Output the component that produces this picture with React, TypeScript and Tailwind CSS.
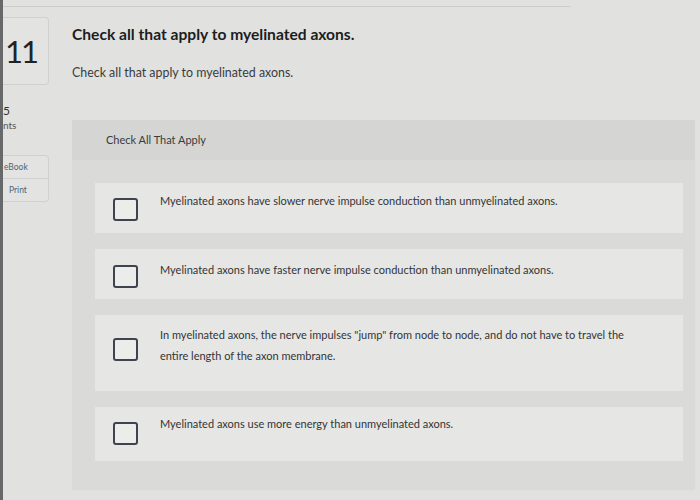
import React from "react";

const options = [
  { text: "Myelinated axons have slower nerve impulse conduction than unmyelinated axons.", h: "h-[50px]", box: "mt-[15px]", txt: "mt-[7px]" },
  { text: "Myelinated axons have faster nerve impulse conduction than unmyelinated axons.", h: "h-[50px]", box: "mt-[16px]", txt: "mt-[10px]" },
  { text: "In myelinated axons, the nerve impulses \"jump\" from node to node, and do not have to travel the entire length of the axon membrane.", h: "h-[76px]", box: "mt-[23px]", txt: "mt-[9px]" },
  { text: "Myelinated axons use more energy than unmyelinated axons.", h: "h-[54px]", box: "mt-[15px]", txt: "mt-[6px]" },
];

export default function App() {
  return (
    <div
      className="w-[700px] h-[500px] overflow-hidden bg-[#e1e2df] flex text-[#2f3033]"
      style={{ fontFamily: "Lato, 'Open Sans', sans-serif" }}
    >
      <div className="w-[3px] h-full bg-[#66686a] shrink-0" />
      <div className="flex-1 flex flex-col">
        <div className="h-[7px] w-[567px] border-b border-[#cbccc9] shrink-0" />
        <div className="flex flex-1">
          <div className="w-[46px] shrink-0 flex flex-col">
            <div className="mt-[10px] h-[68px] border border-l-0 border-[#d0d1ce] rounded-r-[4px] bg-[#e3e4e1] flex items-center">
              <span className="text-[31px] leading-none font-normal tracking-[-2px] text-[#222] ml-[2px]">11</span>
            </div>
            <div className="mt-[19px] text-[12px] leading-[14px] text-[#333]">5</div>
            <div className="text-[10px] leading-[14px] text-[#555]">nts</div>
            <div className="mt-[23px] border border-l-0 border-[#d0d1ce] rounded-r-[4px] bg-[#e3e4e1] flex flex-col text-[8.5px] text-[#4d6478]">
              <div className="h-[23px] flex items-center pl-[1px] border-b border-[#d0d1ce]">eBook</div>
              <div className="h-[22px] flex items-center pl-[6px]">Print</div>
            </div>
          </div>
          <div className="flex-1 flex flex-col ml-[23px] mr-[5px]">
            <h1 className="mt-[17px] text-[15.6px] leading-[20px] font-bold text-[#1c1d1f]">
              Check all that apply to myelinated axons.
            </h1>
            <p className="mt-[21px] text-[12.4px] leading-[16px] text-[#3a3b3d]">
              Check all that apply to myelinated axons.
            </p>
            <div className="mt-[39px] mb-[10px] flex-1 bg-[#dadbd8] flex flex-col">
              <div className="h-[40px] bg-[#d5d6d3] flex items-center pl-[34px] text-[11px] text-[#3a3b3d]">
                Check All That Apply
              </div>
              <div className="flex flex-col gap-[16px] mt-[23px] ml-[23px] mr-[12px]">
                {options.map((o, i) => (
                  <div key={i} className={`${o.h} bg-[#e6e7e4] flex items-start`}>
                    <div className={`${o.box} ml-[18px] w-[25px] h-[23px] shrink-0 border-2 border-[#3f4350] rounded-[3px] bg-[#ecedea]`} />
                    <div className={`${o.txt} ml-[22px] w-[475px] text-[11px] leading-[21px] text-[#333437]`}>
                      {o.text}
                    </div>
                  </div>
                ))}
              </div>
            </div>
          </div>
        </div>
      </div>
    </div>
  );
}
